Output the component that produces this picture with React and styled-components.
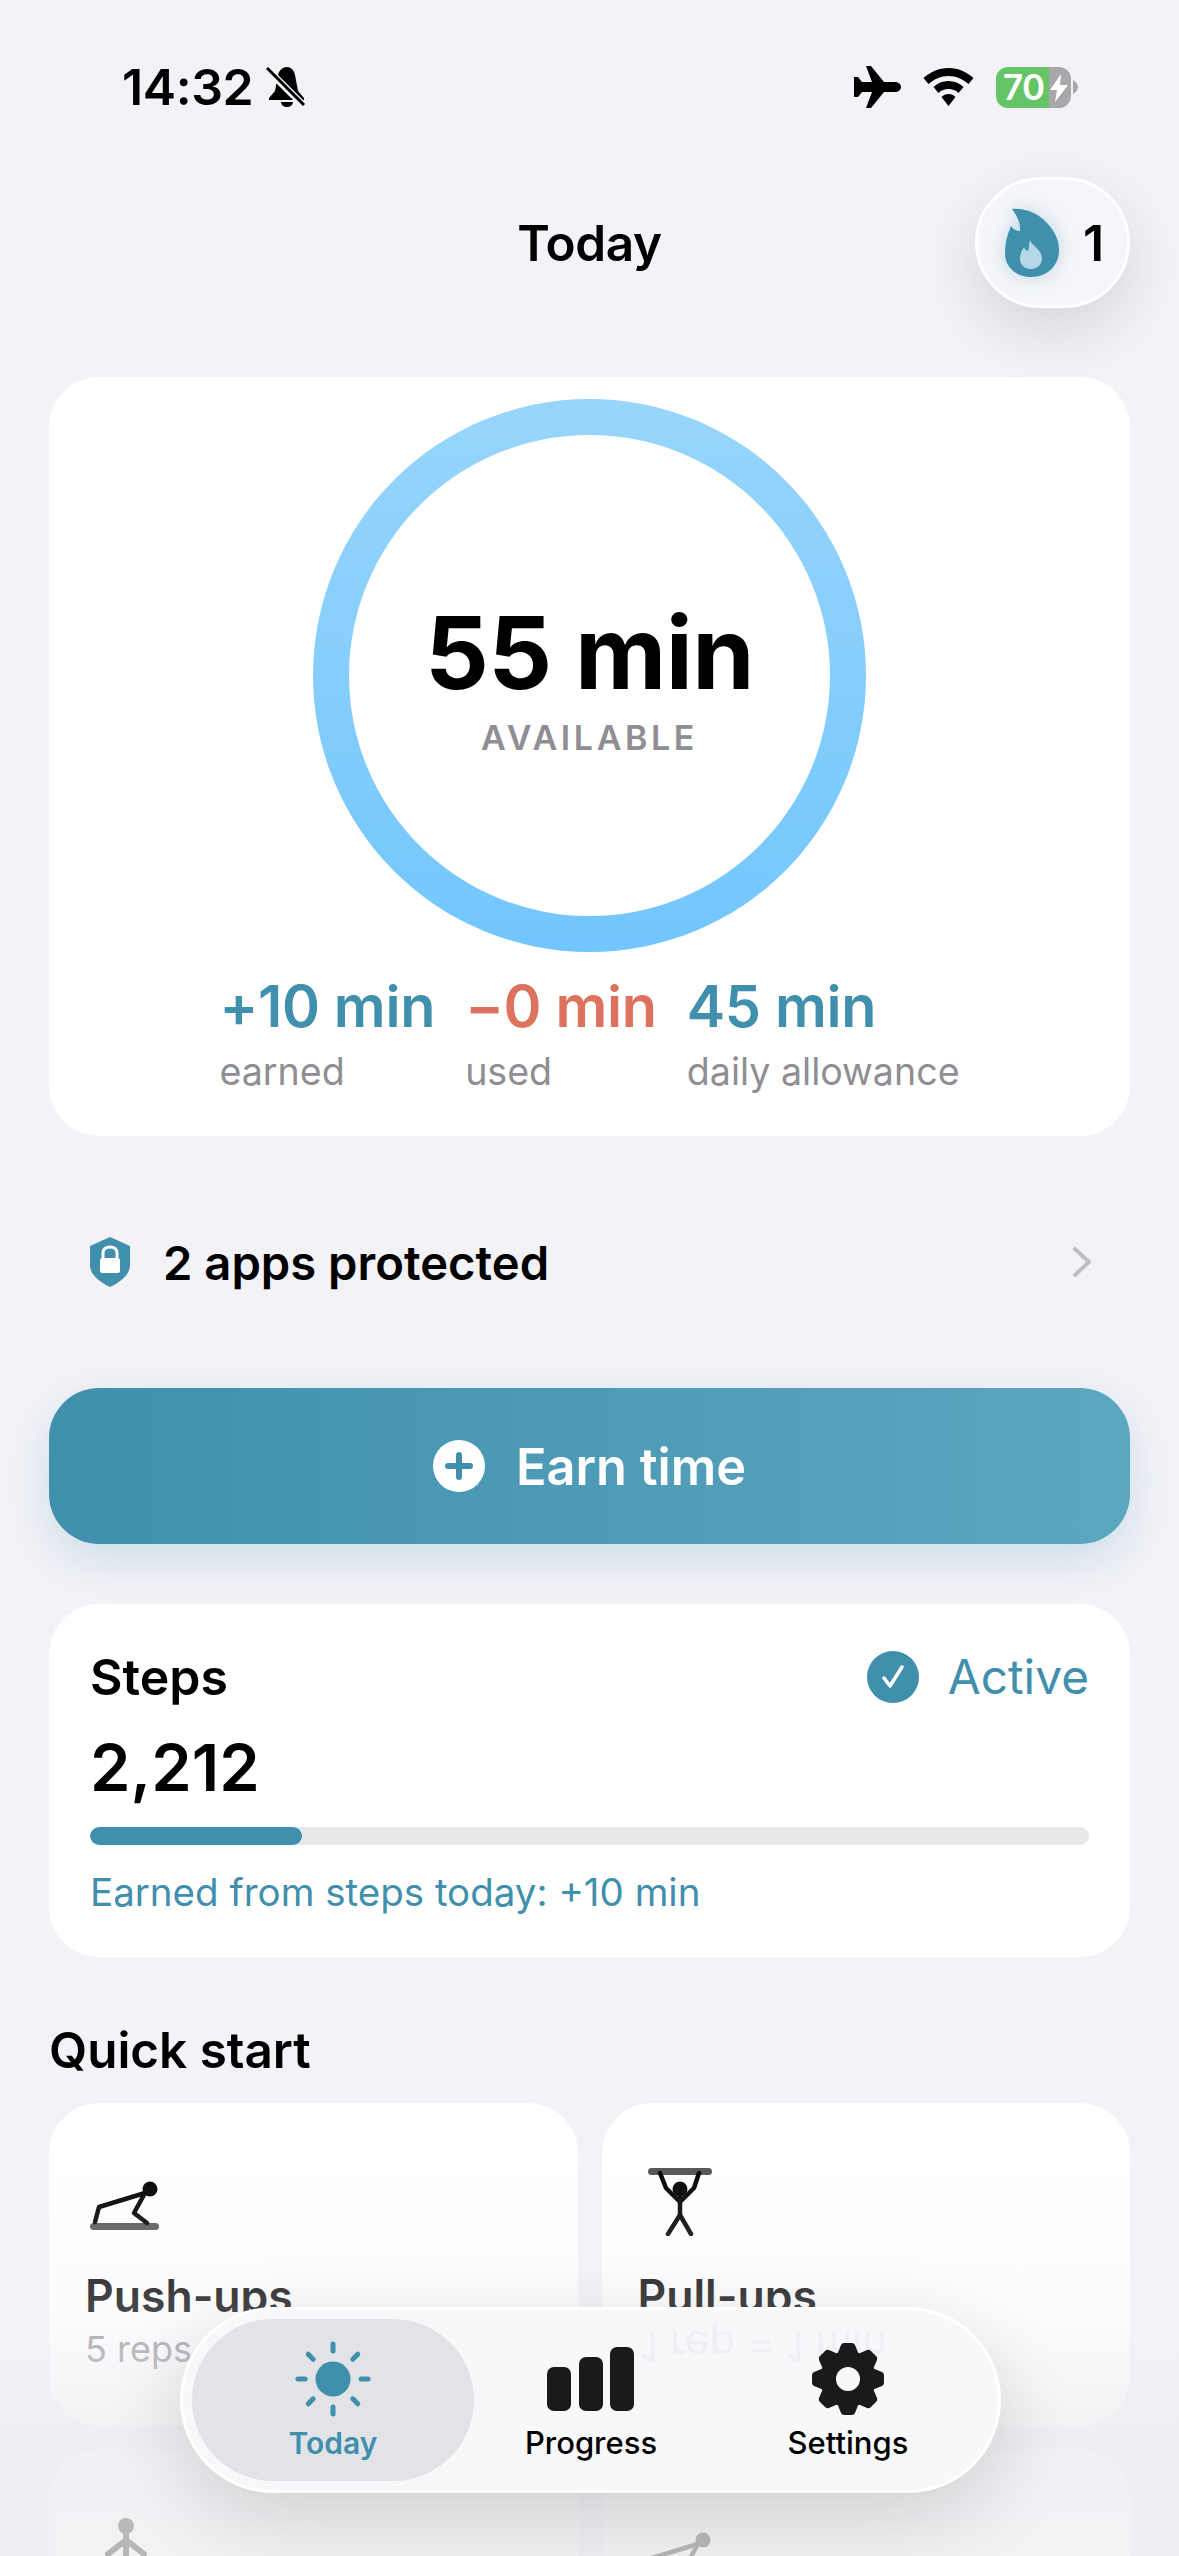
import React from "react";
import styled, { createGlobalStyle } from "styled-components";

const GlobalStyle = createGlobalStyle`
  html, body {
    margin: 0;
    padding: 0;
    background: #f2f2f7;
  }
  body {
    font-family: Inter, "Liberation Sans", sans-serif;
    color: #000;
  }
  * { box-sizing: border-box; }
`;

const teal = "#3f8fad";

const Screen = styled.div`
  position: relative;
  width: 1179px;
  height: 2556px;
  overflow: hidden;
  background: #f2f2f7;
`;

const StatusBar = styled.div`
  display: flex;
  align-items: center;
  justify-content: space-between;
  height: 44px;
  margin-top: 65px;
  padding: 0 101px 0 122px;
`;

const StatusLeft = styled.div`
  display: flex;
  align-items: center;
  gap: 13px;
`;

const StatusRight = styled.div`
  display: flex;
  align-items: center;
  gap: 22px;
`;

const Time = styled.span`
  font-size: 50px;
  font-weight: 600;
  letter-spacing: -0.4px;
  line-height: 44px;
`;

const Battery = styled.div`
  position: relative;
  display: flex;
  align-items: center;
  width: 75px;
  height: 41px;
  padding-left: 7px;
  border-radius: 12px;
  overflow: hidden;
  background: linear-gradient(90deg, #65c466 71%, #a8a8aa 71%);
  color: #fff;
  font-size: 35px;
  font-weight: 600;
  letter-spacing: -0.5px;
`;

const BatteryWrap = styled.div`
  display: flex;
  align-items: center;
  gap: 2px;
`;

const BatteryBolt = styled.svg`
  position: absolute;
  right: 3px;
  top: 7px;
`;

const Header = styled.div`
  display: flex;
  align-items: center;
  justify-content: center;
  height: 131px;
  margin-top: 68px;
  position: relative;
`;

const Title = styled.h1`
  margin: 0;
  font-size: 49.5px;
  font-weight: 600;
  letter-spacing: -0.4px;
`;

const StreakPill = styled.div`
  position: absolute;
  right: 49px;
  top: 0;
  display: flex;
  align-items: center;
  gap: 24px;
  width: 155px;
  height: 131px;
  padding-left: 27px;
  border-radius: 66px;
  background: #f5f6f9;
  border: 3px solid #fff;
  box-shadow: 0 22px 64px rgba(0, 0, 0, 0.12);
  font-size: 50px;
  font-weight: 600;
`;

const FlameSvg = styled.svg`
  filter: drop-shadow(0 0 9px rgba(63, 143, 173, 0.3));
`;

const Content = styled.main`
  display: flex;
  flex-direction: column;
  padding: 69px 49px 0;
`;

const SummaryCard = styled.section`
  display: flex;
  flex-direction: column;
  align-items: center;
  height: 759px;
  padding-top: 22px;
  border-radius: 50px;
  background: #fff;
`;

const Ring = styled.div`
  display: flex;
  flex-direction: column;
  align-items: center;
  justify-content: center;
  width: 553px;
  height: 553px;
  padding-top: 4px;
  border-radius: 50%;
  background-image: linear-gradient(#fff, #fff), linear-gradient(180deg, #98d5fb, #72c6fd);
  background-origin: border-box;
  background-clip: padding-box, border-box;
  border: 36px solid transparent;
`;

const RingValue = styled.div`
  font-size: 100px;
  font-weight: 700;
  line-height: 110px;
  letter-spacing: -0.5px;
`;

const RingLabel = styled.div`
  margin-top: 10px;
  font-size: 34px;
  font-weight: 600;
  line-height: 40px;
  letter-spacing: 3.6px;
  color: #8e8e93;
`;

const Stats = styled.div`
  display: flex;
  gap: 30px;
  margin-top: 24px;
`;

const Stat = styled.div`
  display: flex;
  flex-direction: column;
  gap: 13px;
`;

const StatValue = styled.div`
  font-size: 57.6px;
  font-weight: 600;
  line-height: 60px;
  letter-spacing: -0.3px;
  color: ${(props) => props.$color};
`;

const StatLabel = styled.div`
  font-size: 37.6px;
  line-height: 46px;
  color: #8e8e93;
`;

const ProtectRow = styled.div`
  display: flex;
  align-items: center;
  gap: 33px;
  height: 252px;
  padding: 0 38px 0 41px;
  font-size: 47.2px;
  font-weight: 600;
`;

const Chevron = styled.svg`
  margin-left: auto;
`;

const EarnButton = styled.button`
  display: flex;
  align-items: center;
  justify-content: center;
  gap: 31px;
  height: 156px;
  border: none;
  border-radius: 50px;
  background: linear-gradient(90deg, #3f8fad, #5ca7c0);
  box-shadow: 0 16px 44px rgba(63, 143, 173, 0.2);
  color: #fff;
  font-family: inherit;
  font-size: 50.5px;
  font-weight: 600;
`;

const StepsCard = styled.section`
  display: flex;
  flex-direction: column;
  height: 353px;
  margin-top: 60px;
  padding: 43px 41px 0 41px;
  border-radius: 50px;
  background: #fff;
`;

const StepsHead = styled.div`
  display: flex;
  align-items: center;
  justify-content: space-between;
  height: 60px;
`;

const StepsTitle = styled.div`
  font-size: 50px;
  font-weight: 600;
`;

const ActiveBadge = styled.div`
  display: flex;
  align-items: center;
  gap: 29px;
  font-size: 47.8px;
  color: ${teal};
`;

const StepsCount = styled.div`
  margin-top: 28px;
  font-size: 65px;
  font-weight: 600;
  line-height: 66px;
`;

const Track = styled.div`
  height: 18px;
  margin-top: 26px;
  border-radius: 9px;
  background: #e8e8ea;
  overflow: hidden;
`;

const Fill = styled.div`
  height: 100%;
  border-radius: 9px;
  background: ${teal};
`;

const StepsNote = styled.div`
  margin-top: 24px;
  font-size: 38.5px;
  line-height: 46px;
  color: ${teal};
`;

const SectionTitle = styled.h2`
  margin: 63px 0 23px;
  font-size: 49.4px;
  font-weight: 600;
  line-height: 60px;
`;

const QuickGrid = styled.div`
  display: grid;
  grid-template-columns: 1fr 1fr;
  gap: 24px;
`;

const QuickCard = styled.div`
  display: flex;
  flex-direction: column;
  height: 323px;
  padding: 0 36px;
  border-radius: 50px;
  background: #fff;
`;

const QuickIcon = styled.div`
  height: 164px;
  padding-top: ${(props) => props.$top}px;
`;

const QuickName = styled.div`
  font-size: 44.5px;
  font-weight: 600;
  line-height: 58px;
`;

const QuickSub = styled.div`
  margin-top: 3px;
  font-size: 36px;
  line-height: 42px;
  color: #8e8e93;
`;

const BottomFade = styled.div`
  position: absolute;
  left: 0;
  right: 0;
  bottom: 0;
  height: 400px;
  background: linear-gradient(
    180deg,
    rgba(242, 242, 247, 0) 0%,
    rgba(242, 242, 247, 0.3) 40%,
    rgba(238, 238, 242, 0.82) 72%,
    rgba(238, 238, 242, 0.76) 100%
  );
  pointer-events: none;
`;

const TabBar = styled.nav`
  position: absolute;
  left: 180px;
  top: 2307px;
  display: flex;
  align-items: center;
  width: 821px;
  height: 186px;
  padding: 0 9px;
  border-radius: 93px;
  background: #f7f8fa;
  border: 3px solid #fff;
  box-shadow: 0 24px 80px rgba(0, 0, 0, 0.14);
`;

/* the card text behind the glass shows through mirrored */
const Ghost = styled.div`
  position: absolute;
  left: 458px;
  top: 16px;
  font-size: 42px;
  line-height: 40px;
  white-space: nowrap;
  color: #f0f0f4;
  transform: scaleY(-1);
`;

const Tab = styled.div`
  position: relative;
  display: flex;
  flex-direction: column;
  align-items: center;
  justify-content: flex-end;
  width: ${(props) => props.$width}px;
  height: 162px;
  padding-bottom: 20px;
  border-radius: 81px;
  background: ${(props) => (props.$active ? "#e2e3e6" : "transparent")};
  color: ${(props) => (props.$active ? teal : "#000")};
  font-size: ${(props) => (props.$active ? "30px" : "31px")};
  font-weight: ${(props) => (props.$active ? 600 : 500)};
  line-height: 36px;
`;

const TabIcon = styled.svg`
  margin-bottom: 8px;
`;

function FlameIcon() {
  return (
    <FlameSvg width="54" height="70" viewBox="0 0 54 70">
      <path
        d="M7 1 C20 0 32 5 41 14 C49 22 54 31 54 42 C54 58 42 69 26 69 C11 69 0 59 0 45 C0 36 2 27 6 18 C8 21 11 23 15 23 C16 15 12 8 7 1 Z"
        fill={teal}
      />
      <path
        d="M25 32 C27 38 37 42 37 50 C37 57 32 61 26 61 C20 61 15 57 15 51 C15 46 17 42 19 39 C20 41 21 43 23 43 C24 39 24 36 25 32 Z"
        fill="#b4d8e6"
      />
    </FlameSvg>
  );
}

function PushupIcon() {
  return (
    <svg width="75" height="50" viewBox="-5 0 75 50">
      <rect x="0" y="42" width="69" height="7" rx="3.5" fill="#555" />
      <circle cx="60" cy="8" r="7.5" fill="#000" />
      <path
        d="M5 41 L9 26 L55 12 L44 32 L57 42"
        fill="none"
        stroke="#000"
        strokeWidth="4.5"
        strokeLinecap="round"
        strokeLinejoin="round"
      />
    </svg>
  );
}

function PullupIcon() {
  return (
    <svg width="74" height="68" viewBox="-10 0 74 68">
      <rect x="0" y="0" width="64" height="7" rx="3.5" fill="#555" />
      <circle cx="32" cy="21" r="7.5" fill="#000" />
      <path
        d="M12 5 L18 20 L32 34 L46 20 L51 5 M32 26 L32 47 M32 47 L20 66 M32 47 L43 66"
        fill="none"
        stroke="#000"
        strokeWidth="4.5"
        strokeLinecap="round"
        strokeLinejoin="round"
      />
    </svg>
  );
}

function StandIcon() {
  return (
    <svg width="62" height="70" viewBox="-20 0 62 70">
      <circle cx="21" cy="10" r="8" fill="#000" />
      <path
        d="M21 14 L21 48 M21 24 L3 38 M21 24 L39 38 M21 48 L10 70 M21 48 L32 70"
        fill="none"
        stroke="#000"
        strokeWidth="6"
        strokeLinecap="round"
      />
    </svg>
  );
}

function SunIcon() {
  return (
    <TabIcon width="76" height="76" viewBox="-38 -38 76 76">
      <circle r="17.5" fill={teal} />
      {[0, 45, 90, 135, 180, 225, 270, 315].map((deg) => (
        <line
          key={deg}
          x1="0"
          y1="-28"
          x2="0"
          y2="-35"
          stroke={teal}
          strokeWidth="5"
          strokeLinecap="round"
          transform={`rotate(${deg})`}
        />
      ))}
    </TabIcon>
  );
}

function BarsIcon() {
  return (
    <TabIcon width="88" height="76" viewBox="0 0 88 76">
      <rect x="0" y="26" width="24" height="44" rx="7" fill="#1a1a1a" />
      <rect x="32" y="16" width="24" height="54" rx="7" fill="#1a1a1a" />
      <rect x="63" y="6" width="24" height="64" rx="7" fill="#1a1a1a" />
    </TabIcon>
  );
}

function GearIcon() {
  return (
    <TabIcon width="76" height="76" viewBox="-38 -38 76 76">
      {[0, 45, 90, 135, 180, 225, 270, 315].map((deg) => (
        <path
          key={deg}
          d="M-11 -24 L-7 -34 Q-6 -36 -4 -36 L4 -36 Q6 -36 7 -34 L11 -24 Z"
          fill="#1a1a1a"
          transform={`rotate(${deg})`}
        />
      ))}
      <circle r="20" fill="none" stroke="#1a1a1a" strokeWidth="16" />
    </TabIcon>
  );
}

const stepsProgress = 21.2;

export default function App() {
  return (
    <Screen>
      <GlobalStyle />
      <StatusBar>
        <StatusLeft>
          <Time>14:32</Time>
          <svg width="40" height="42" viewBox="0 0 40 42">
            <path
              d="M21 1 C25 1 28 4 29 9 L32 25 L38 32 L38 34 L3 34 L3 32 L9 25 L12 9 C13 4 17 1 21 1 Z M15 36 L27 36 C27 39 24 41 21 41 C18 41 15 39 15 36 Z"
              fill="#000"
            />
            <path d="M1 3 L38 40" stroke="#f2f2f7" strokeWidth="7" />
            <path d="M1 2 L38 39" stroke="#000" strokeWidth="3" />
          </svg>
        </StatusLeft>
        <StatusRight>
          <svg width="47" height="42" viewBox="0 0 47 42">
            <path
              d="M12 0 L17 0 L30 16 L41 16 C44 16 47 18 47 21 C47 24 44 26 41 26 L30 26 L17 42 L12 42 L18 26 L8 26 L4 31 L0 31 L0 21 L0 11 L4 11 L8 16 L18 16 Z"
              fill="#000"
            />
          </svg>
          <svg width="51" height="38" viewBox="0 0 50 38">
            <path
              d="M25 0 C35 0 43 4 50 10 L45 16 C39 11 33 8 25 8 C17 8 11 11 5 16 L0 10 C7 4 15 0 25 0 Z M25 13 C31 13 36 15 40 19 L35 25 C32 22 29 21 25 21 C21 21 18 22 15 25 L10 19 C14 15 19 13 25 13 Z M25 26 C28 26 30 27 32 29 L25 38 L18 29 C20 27 22 26 25 26 Z"
              fill="#000"
            />
          </svg>
          <BatteryWrap>
            <Battery>
              70
              <BatteryBolt width="18" height="28" viewBox="0 0 18 28">
                <path d="M11 0 L0 16 L7 16 L5 28 L18 11 L10 11 Z" fill="#fff" />
              </BatteryBolt>
            </Battery>
            <svg width="5" height="14" viewBox="0 0 5 14">
              <path d="M0 0 C3 2 5 4 5 7 C5 10 3 12 0 14 Z" fill="#a8a8aa" />
            </svg>
          </BatteryWrap>
        </StatusRight>
      </StatusBar>

      <Header>
        <Title>Today</Title>
        <StreakPill>
          <FlameIcon />
          <span>1</span>
        </StreakPill>
      </Header>

      <Content>
        <SummaryCard>
          <Ring>
            <RingValue>55 min</RingValue>
            <RingLabel>AVAILABLE</RingLabel>
          </Ring>
          <Stats>
            <Stat>
              <StatValue $color={teal}>+10 min</StatValue>
              <StatLabel>earned</StatLabel>
            </Stat>
            <Stat>
              <StatValue $color="#dd735f">−0 min</StatValue>
              <StatLabel>used</StatLabel>
            </Stat>
            <Stat>
              <StatValue $color={teal}>45 min</StatValue>
              <StatLabel>daily allowance</StatLabel>
            </Stat>
          </Stats>
        </SummaryCard>

        <ProtectRow>
          <svg width="40" height="50" viewBox="0 0 40 50">
            <path
              d="M20 0 L40 9 L40 28 C40 38 30 45 20 50 C10 45 0 38 0 28 L0 9 Z"
              fill={teal}
            />
            <path
              d="M13 21 L13 16 C13 12 16 10 20 10 C24 10 27 12 27 16 L27 21"
              fill="none"
              stroke="#fff"
              strokeWidth="3"
            />
            <rect x="10" y="21" width="20" height="15" rx="2.5" fill="#fff" />
          </svg>
          <span>2 apps protected</span>
          <Chevron width="20" height="32" viewBox="0 0 20 32">
            <path
              d="M3 3 L17 16 L3 29"
              fill="none"
              stroke="#bfbfc2"
              strokeWidth="4"
              strokeLinecap="round"
              strokeLinejoin="round"
            />
          </Chevron>
        </ProtectRow>

        <EarnButton>
          <svg width="52" height="52" viewBox="0 0 52 52">
            <circle cx="26" cy="26" r="26" fill="#fff" />
            <path d="M26 15 L26 37 M15 26 L37 26" stroke={teal} strokeWidth="6" strokeLinecap="round" />
          </svg>
          Earn time
        </EarnButton>

        <StepsCard>
          <StepsHead>
            <StepsTitle>Steps</StepsTitle>
            <ActiveBadge>
              <svg width="52" height="52" viewBox="0 0 52 52">
                <circle cx="26" cy="26" r="26" fill={teal} />
                <path
                  d="M17 27 L23 35 L35 16"
                  fill="none"
                  stroke="#fff"
                  strokeWidth="3.5"
                  strokeLinecap="round"
                  strokeLinejoin="round"
                />
              </svg>
              Active
            </ActiveBadge>
          </StepsHead>
          <StepsCount>2,212</StepsCount>
          <Track>
            <Fill style={{ width: `${stepsProgress}%` }} />
          </Track>
          <StepsNote>Earned from steps today: +10 min</StepsNote>
        </StepsCard>

        <SectionTitle>Quick start</SectionTitle>
        <QuickGrid>
          <QuickCard>
            <QuickIcon $top={78}>
              <PushupIcon />
            </QuickIcon>
            <QuickName>Push-ups</QuickName>
            <QuickSub>5 reps</QuickSub>
          </QuickCard>
          <QuickCard>
            <QuickIcon $top={65}>
              <PullupIcon />
            </QuickIcon>
            <QuickName>Pull-ups</QuickName>
          </QuickCard>
          <QuickCard>
            <QuickIcon $top={66}>
              <StandIcon />
            </QuickIcon>
          </QuickCard>
          <QuickCard>
            <QuickIcon $top={82}>
              <PushupIcon />
            </QuickIcon>
          </QuickCard>
        </QuickGrid>
      </Content>

      <BottomFade />

      <TabBar>
        <Ghost aria-hidden="true">1 rep = 1 min</Ghost>
        <Tab $active $width={282}>
          <SunIcon />
          Today
        </Tab>
        <Tab $width={234}>
          <BarsIcon />
          Progress
        </Tab>
        <Tab $width={280}>
          <GearIcon />
          Settings
        </Tab>
      </TabBar>
    </Screen>
  );
}
